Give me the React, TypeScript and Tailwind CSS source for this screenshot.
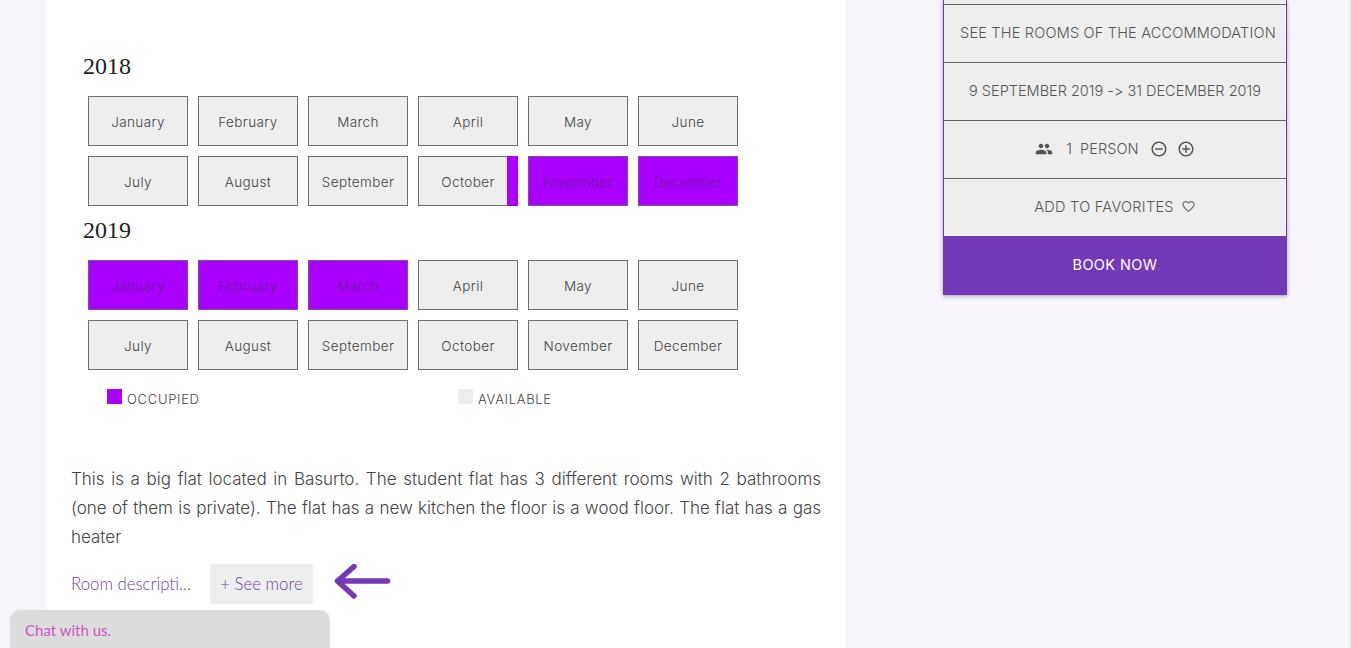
import type React from "react"
import { MdPeople, MdRemoveCircleOutline, MdAddCircleOutline, MdFavoriteBorder } from "react-icons/md"

const row1 = ["January", "February", "March", "April", "May", "June"]
const row2 = ["July", "August", "September", "October", "November", "December"]

function Month({ name, full, part }: { name: string; full?: boolean; part?: boolean }) {
  return (
    <div
      className={`relative flex h-[50px] w-[100px] items-center justify-center border pt-[2px] text-[13.5px] font-light tracking-[0.4px] ${
        full ? "border-[#7c4f9c] bg-[#aa00ff] text-[#6a1b9a]" : "border-[#6e6e6e] bg-[#eeeeee] text-[#444444]"
      }`}
    >
      {name}
      {part && <div className="absolute -top-px -right-px -bottom-px w-[11px] bg-[#aa00ff]" />}
    </div>
  )
}

function Year({ year, occupied, part }: { year: string; occupied: string[]; part?: string }) {
  return (
    <div>
      <h2 className="ml-[12px] h-[40px] font-['Liberation_Serif',serif] text-[24px] leading-[40px] text-[#222222]">
        {year}
      </h2>
      <div className="mt-[10px] ml-[17px] flex flex-col gap-[10px]">
        {[row1, row2].map((row, i) => (
          <div key={i} className="flex gap-[10px]">
            {row.map((m) => (
              <Month key={m} name={m} full={occupied.includes(`${i}-${m}`)} part={part === m} />
            ))}
          </div>
        ))}
      </div>
    </div>
  )
}

function SideRow({ children }: { children: React.ReactNode }) {
  return (
    <div className="flex h-[58px] items-center justify-center border-t border-[#666666] pb-[2px] text-[14.5px] font-light text-[#555555] [font-variant-ligatures:none] [font-feature-settings:'calt'_0]">
      {children}
    </div>
  )
}

export default function App() {
  return (
    <div className="relative h-[648px] overflow-hidden border-r-[2px] border-[#f0eef2] bg-[#f7f4fc] font-['Inter',sans-serif]">
      <div className="flex items-start pl-[46px]">
        {/* main card */}
        <div className="h-[648px] w-[800px] bg-white pt-[46px] pl-[25px]">
          <Year year="2018" occupied={["1-November", "1-December"]} part="October" />
          <div className="mt-[4px]">
            <Year year="2019" occupied={["0-January", "0-February", "0-March"]} />
          </div>

          <div className="mt-[19px] ml-[36px] flex text-[13px] font-light tracking-[0.7px] text-[#444444]">
            <div className="flex w-[351px] items-start gap-[5px]">
              <span className="h-[15px] w-[15px] bg-[#aa00ff]" />
              <span className="mt-[2px] leading-[16px]">OCCUPIED</span>
            </div>
            <div className="flex items-start gap-[5px]">
              <span className="h-[15px] w-[15px] bg-[#eeeeee]" />
              <span className="mt-[2px] leading-[16px]">AVAILABLE</span>
            </div>
          </div>

          <p className="mt-[58px] w-[750px] text-justify text-[17px] leading-[29px] font-light text-[#444444]">
            This is a big flat located in Basurto. The student flat has 3 different rooms with 2 bathrooms (one of them
            is private). The flat has a new kitchen the floor is a wood floor. The flat has a gas heater
          </p>

          <div className="mt-[12px] flex items-center font-['Lato',sans-serif] text-[16.8px] font-light text-[#6a3fb0]">
            <span className="w-[139px]">Room descripti...</span>
            <span className="flex h-[40px] w-[103px] items-center justify-center bg-[#eeeeee]">+ See more</span>
            <svg className="ml-[20px]" width="58" height="40" viewBox="0 0 58 40" fill="none">
              <path
                d="M4.5 17H54.5M21 2.5L4.5 17L21 32"
                stroke="#7339b9"
                strokeWidth="5.5"
                strokeLinecap="round"
                strokeLinejoin="round"
              />
            </svg>
          </div>
        </div>

        {/* booking sidebar */}
        <div className="ml-[97px] w-[344px] border-x border-[#7339b9] bg-[#eeeeee] pt-[4px] shadow-[0_1px_4px_rgba(0,0,0,0.35)]">
          <SideRow>
            <span className="pl-[6px] tracking-[0.2px]">SEE THE ROOMS OF THE ACCOMMODATION</span>
          </SideRow>
          <SideRow>9 SEPTEMBER 2019 -&gt; 31 DECEMBER 2019</SideRow>
          <SideRow>
            <MdPeople className="mr-[13px] h-[18px] w-[18px] text-[#555555]" />
            <span>1</span>
            <span className="ml-[8px] tracking-[0.1px]">PERSON</span>
            <MdRemoveCircleOutline className="ml-[11px] h-[18px] w-[18px]" />
            <MdAddCircleOutline className="ml-[9px] h-[18px] w-[18px]" />
          </SideRow>
          <SideRow>
            <span className="tracking-[0.3px]">ADD TO FAVORITES</span>
            <MdFavoriteBorder className="ml-[7px] h-[15px] w-[15px] text-[#777777]" />
          </SideRow>
          <div className="-mx-px flex h-[59px] items-center justify-center bg-[#7339b9] pb-[2px] text-[14.5px] tracking-[0.4px] text-white">
            BOOK NOW
          </div>
        </div>
      </div>

      {/* chat widget */}
      <div className="absolute bottom-0 left-[10px] h-[38px] w-[320px] rounded-t-[10px] bg-[#dcdcdc] pt-[10px] pl-[15px] font-['Lato',sans-serif] text-[15px] leading-[20px] text-[#cc55c4]">
        Chat with us.
      </div>
    </div>
  )
}
